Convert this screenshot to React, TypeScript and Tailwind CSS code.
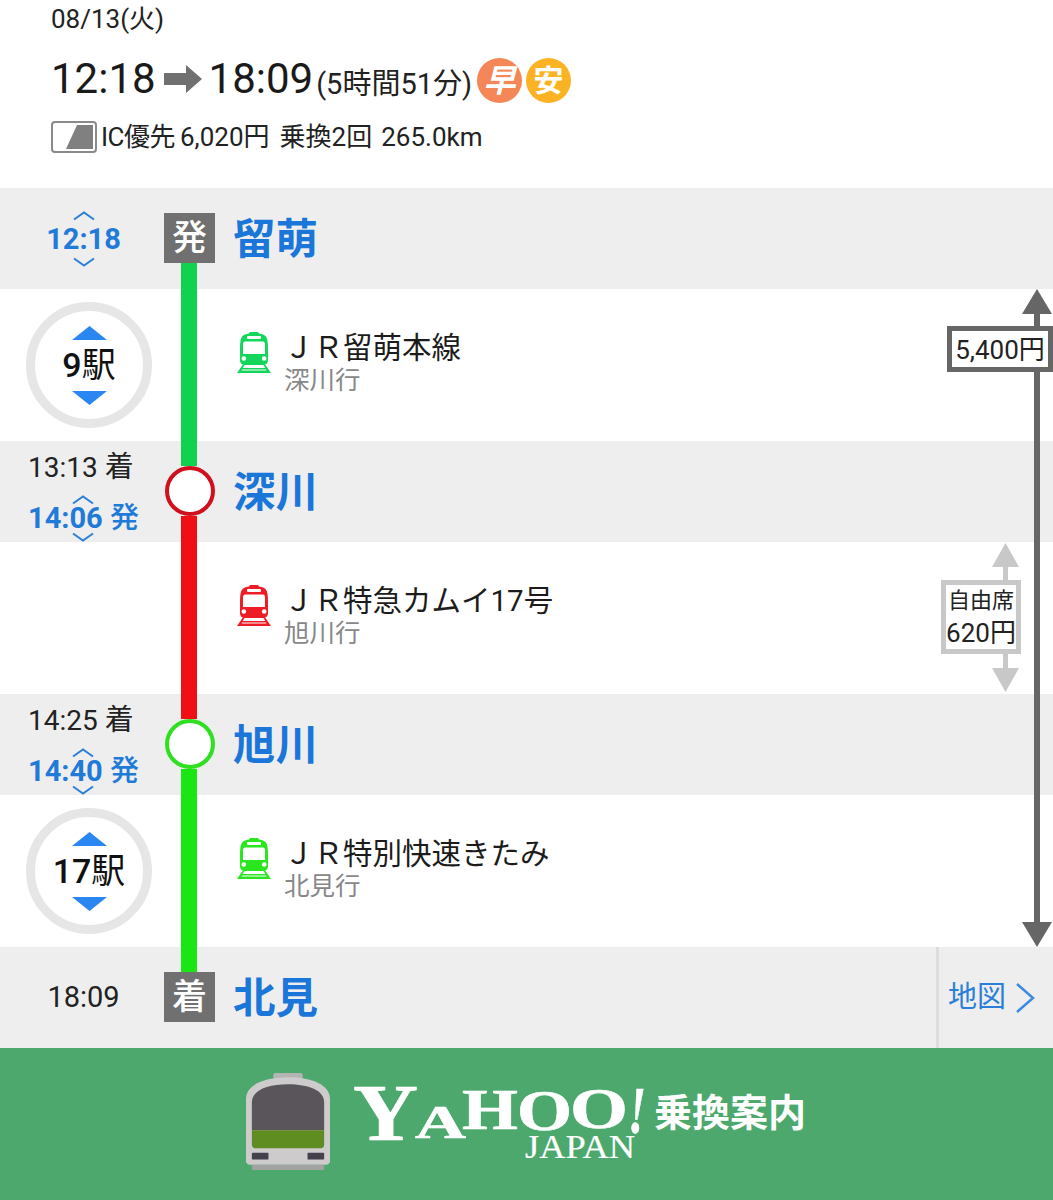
import React from "react";

const TrainIcon = ({ color }: { color: string }) => (
  <svg width="34" height="41" viewBox="0 0 34 41" className="shrink-0">
    <path d="M13 0h8l1 1.500c4 .5 7 2 8 5 .7 2.500 1 6 1 10V28c0 3-2 5-5 5H8c-3 0-5-2-5-5V16.500c0-4 .3-7.500 1-10 1-3 4-4.500 8-5z" fill={color} />
    <rect x="10" y="4" width="14" height="3" rx="1" fill="#fff" />
    <path d="M6 12c0-1.500 1-2.500 2-2.500h18c1 0 2 1 2 2.500v10H6z" fill="#fff" />
    <circle cx="6.800" cy="26.500" r="2.300" fill="#fff" />
    <circle cx="27.200" cy="26.500" r="2.300" fill="#fff" />
    <path d="M5.500 33 0 41h34L28.500 33h-2l1.800 3H5.700l1.800-3zM4.600 38.500l.5-1h23.800l.5 1z" fill={color} />
  </svg>
);

const Chevron = ({ down }: { down?: boolean }) => (
  <svg width="24" height="11" viewBox="0 0 24 11" fill="none" stroke="#2a7fd8" strokeWidth="2" className="block">
    <path d={down ? "M2 1.500l10 7 10-7" : "M2 9.500l10-7 10 7"} />
  </svg>
);

const Triangle = ({ down, width, height, color }: { down?: boolean; width: number; height: number; color: string }) => (
  <svg width={width} height={height} viewBox="0 0 30 26" preserveAspectRatio="none" className="block shrink-0">
    <path d={down ? "M0 0h30L15 26z" : "M0 26h30L15 0z"} fill={color} />
  </svg>
);

const StationMark = ({ label, barBottom, barTop }: { label: string; barTop?: string; barBottom?: string }) => (
  <div className="flex h-full w-[51px] flex-col items-center">
    <div className={`mr-[1px] h-[25px] w-4 shrink-0 ${barTop ?? ""}`} />
    <div className="flex h-[50px] w-[51px] shrink-0 items-center justify-center bg-[#707070] text-[35px] font-medium leading-none text-white">
      {label}
    </div>
    <div className={`mr-[1px] w-4 flex-1 ${barBottom ?? ""}`} />
  </div>
);

const StopMark = ({ ring, barTop, barBottom }: { ring: string; barTop: string; barBottom: string }) => (
  <div className="flex h-full w-[51px] flex-col items-center">
    <div className={`mr-[1px] h-[25px] w-4 shrink-0 ${barTop}`} />
    <div className={`h-[50px] w-[50px] shrink-0 rounded-full border-[4px] bg-white ${ring}`} />
    <div className={`mr-[1px] w-4 flex-1 ${barBottom}`} />
  </div>
);

const StationRow = ({
  time,
  mark,
  name,
  right,
}: {
  time: React.ReactNode;
  mark: React.ReactNode;
  name: string;
  right?: React.ReactNode;
}) => (
  <div className="flex h-[101px] bg-[#eeeeee]">
    <div className="h-full w-[164px] shrink-0">{time}</div>
    {mark}
    <div className="flex-1 pl-[18px] pt-[1px] text-[42.500px] font-bold leading-[101px] text-[#1a76d9]">{name}</div>
    {right}
  </div>
);

const StopTimes = ({ arrive, depart }: { arrive: string; depart: string }) => (
  <div className="flex h-full flex-col justify-center pl-[28px] pt-[3px]">
    <div className="h-[51px] text-[28px] leading-[51px] text-[#222]">
      {arrive} <span className="text-[29px]">着</span>
    </div>
    <div className="h-[51px] text-[29px] font-bold leading-[51px] text-[#1f7ad8]">
      <span className="relative inline-block">
        {depart}
        <span className="absolute left-[43px] top-[1px]"><Chevron /></span>
        <span className="absolute left-[43px] bottom-[1px]"><Chevron down /></span>
      </span>{" "}
      <span className="font-medium">発</span>
    </div>
  </div>
);

const StationCount = ({ count }: { count: string }) => (
  <div className="flex h-[126px] w-[126px] flex-col items-center rounded-full border-[9px] border-[#e6e6e6] bg-white pt-[15px]">
    <Triangle width={35} height={14} color="#2a86f0" />
    <div className="h-[51px] text-[34px] leading-[51px] text-[#111]">
      <span className="font-medium">{count}</span>駅
    </div>
    <Triangle down width={35} height={14} color="#2a86f0" />
  </div>
);

const SegmentRow = ({
  bar,
  iconColor,
  line,
  dest,
  left,
}: {
  bar: string;
  iconColor: string;
  line: string;
  dest: string;
  left?: React.ReactNode;
}) => (
  <div className="flex h-[152px] bg-white">
    <div className="flex h-full w-[164px] shrink-0 items-center pl-[26px]">{left}</div>
    <div className="flex h-full w-[51px] justify-center">
      <div className={`mr-[1px] h-full w-4 ${bar}`} />
    </div>
    <div className="flex pl-[22px] pt-[43px]">
      <TrainIcon color={iconColor} />
      <div className="pl-[13px]">
        <div className="mt-[1px] h-[30px] text-[29.500px] leading-[30px] text-[#1c1c1c]">{line}</div>
        <div className="mt-[2px] h-[30px] text-[25.500px] leading-[30px] text-[#888]">{dest}</div>
      </div>
    </div>
  </div>
);

// fare arrows run across several rows, so they sit over the timeline
const FareArrows = () => (
  <>
    <div className="absolute right-[1px] top-[101px] flex h-[658px] w-[30px] flex-col items-center">
      <Triangle width={30} height={25} color="#666666" />
      <div className="w-[6px] flex-1 bg-[#666666]" />
      <Triangle down width={30} height={25} color="#666666" />
    </div>
    <div className="absolute left-[947px] top-[138px] flex h-[46px] w-[106px] items-center justify-center border-[5px] border-[#666666] bg-white pt-[2px] text-[26px] leading-none text-[#222]">
      5,400円
    </div>
    <div className="absolute left-[992px] top-[355px] flex h-[149px] w-[27px] flex-col items-center">
      <Triangle width={27} height={24} color="#c8c8c8" />
      <div className="w-[5px] flex-1 bg-[#c8c8c8]" />
      <Triangle down width={27} height={24} color="#c8c8c8" />
    </div>
    <div className="absolute left-[941px] top-[392px] flex h-[74px] w-[80px] flex-col items-center justify-center border-[5px] border-[#c8c8c8] bg-white text-[#222]">
      <div className="text-[22px] leading-[32px]">自由席</div>
      <div className="text-[26px] leading-[32px]">620円</div>
    </div>
  </>
);

const FooterTrain = () => (
  <svg width="84" height="97" viewBox="0 0 86 112" preserveAspectRatio="none" className="shrink-0">
    <rect x="28" y="0" width="30" height="10" rx="2" fill="#b4b4b4" />
    <path d="M0 30C0 14 18 5 43 5s43 9 43 25v72c0 2-2 4-4 4H4c-2 0-4-2-4-4z" fill="#cdcbcb" />
    <rect x="6" y="106" width="74" height="6" fill="#a3a3a3" />
    <path d="M6 34C6 20 22 13 43 13s37 7 37 21v32H6z" fill="#59555b" />
    <path d="M6 66h74v17c0 2-2 4-4 4H10c-2 0-4-2-4-4z" fill="#5f8d22" />
    <rect x="6" y="92" width="17" height="8" rx="1" fill="#45414a" />
    <rect x="63" y="92" width="17" height="8" rx="1" fill="#45414a" />
  </svg>
);

const YahooLogo = () => (
  <svg width="295" height="85" viewBox="0 0 295 85" className="shrink-0">
    <g fill="#ffffff" stroke="#ffffff" strokeWidth="0.6" fontFamily="'Liberation Serif', serif" fontWeight="700">
      <text x="0" y="55" fontSize="80" textLength="65" lengthAdjust="spacingAndGlyphs">Y</text>
      <text x="62" y="53" fontSize="46" textLength="51" lengthAdjust="spacingAndGlyphs">A</text>
      <text x="109" y="44" fontSize="56" textLength="56" lengthAdjust="spacingAndGlyphs">H</text>
      <text x="164" y="45" fontSize="56" textLength="55" lengthAdjust="spacingAndGlyphs">O</text>
      <text x="217" y="43" fontSize="56" textLength="58" lengthAdjust="spacingAndGlyphs">O</text>
      <text x="275" y="48" fontSize="68" fontStyle="italic" textLength="18" lengthAdjust="spacingAndGlyphs">!</text>
      <text x="172" y="73" fontSize="33" fontWeight="400" strokeWidth="0.2" textLength="110" lengthAdjust="spacingAndGlyphs">JAPAN</text>
    </g>
  </svg>
);

export default function App() {
  return (
    <div className="h-[1200px] w-[1053px] overflow-hidden bg-white font-['Roboto','Noto_Sans_CJK_JP',sans-serif]">
      <div className="h-[188px] pl-[51px] text-[#222]">
        <div className="h-[38px] text-[26px] leading-[38px]">08/13(火)</div>
        <div className="mt-[11px] flex h-[60px] items-center">
          <span className="text-[42px] leading-none text-[#1a1a1a]">12:18</span>
          <svg width="38" height="28" viewBox="0 0 38 28" className="ml-[8px] mr-[7px]">
            <path d="M0 8h22V0l16 14-16 14v-8H0z" fill="#707070" />
          </svg>
          <span className="text-[42px] leading-none text-[#1a1a1a]">18:09</span>
          <span className="ml-[3px] mt-[11px] text-[29px] leading-none">(5時間51分)</span>
          <span className="ml-[5px] mt-[3px] flex h-[45px] w-[45px] items-center justify-center rounded-full bg-[#f58657] text-[32px] font-bold italic leading-none text-white">
            早
          </span>
          <span className="ml-[4px] mt-[3px] flex h-[45px] w-[45px] items-center justify-center rounded-full bg-[#fbb324] text-[30px] font-bold leading-none text-white">
            安
          </span>
        </div>
        <div className="mt-[8px] flex h-[40px] items-center text-[26px] leading-none">
          <span className="mr-[4px] flex h-[32px] w-[46px] items-end justify-end rounded-[4px] border-[2px] border-[#8a8a8a] p-[2px]">
            <svg width="27" height="24" viewBox="0 0 27 24" className="block">
              <path d="M11 0h16v24H0z" fill="#808080" />
            </svg>
          </span>
          <span className="tracking-[-0.5px]">IC優先</span>
          <span className="ml-[5px]">6,020円</span>
          <span className="ml-[10px]">乗換2回</span>
          <span className="ml-[9px]">265.0km</span>
        </div>
      </div>

      <div className="relative">
        <StationRow
          time={
            <div className="flex h-full flex-col items-center justify-center pl-[3px] text-[29px] font-bold leading-[36px] text-[#1f7ad8]">
              <Chevron />
              <span>12:18</span>
              <Chevron down />
            </div>
          }
          mark={<StationMark label="発" barBottom="bg-[#0fd34f]" />}
          name="留萌"
        />
        <SegmentRow
          bar="bg-[#0fd34f]"
          iconColor="#14d65a"
          line="ＪＲ留萌本線"
          dest="深川行"
          left={<StationCount count="9" />}
        />
        <StationRow
          time={<StopTimes arrive="13:13" depart="14:06" />}
          mark={<StopMark ring="border-[#d0101c]" barTop="bg-[#0fd34f]" barBottom="bg-[#f00f14]" />}
          name="深川"
        />
        <SegmentRow bar="bg-[#f00f14]" iconColor="#ee1c25" line="ＪＲ特急カムイ17号" dest="旭川行" />
        <StationRow
          time={<StopTimes arrive="14:25" depart="14:40" />}
          mark={<StopMark ring="border-[#2fe020]" barTop="bg-[#f00f14]" barBottom="bg-[#19e612]" />}
          name="旭川"
        />
        <SegmentRow
          bar="bg-[#19e612]"
          iconColor="#2ae61e"
          line="ＪＲ特別快速きたみ"
          dest="北見行"
          left={<StationCount count="17" />}
        />
        <StationRow
          time={
            <div className="flex h-full items-center justify-center pl-[3px] text-[29px] text-[#222]">18:09</div>
          }
          mark={<StationMark label="着" barTop="bg-[#19e612]" />}
          name="北見"
          right={
            <div className="flex h-full w-[117px] items-center border-l-[3px] border-[#dddddd] pl-[9px] text-[29px] text-[#2a7fd8]">
              地図
              <svg width="20" height="32" viewBox="0 0 20 32" fill="none" stroke="#3d8be0" strokeWidth="2.500" className="ml-[9px]">
                <path d="M2 2l16 14L2 30" />
              </svg>
            </div>
          }
        />
        <FareArrows />
      </div>

      <div className="flex h-[152px] items-start bg-[#4ca86c] pl-[246px] pt-[25px]">
        <FooterTrain />
        <div className="ml-[23px] mt-[12px]">
          <YahooLogo />
        </div>
        <div className="ml-[6px] mt-[20px] text-[38px] font-bold leading-[40px] text-white">乗換案内</div>
      </div>
    </div>
  );
}
